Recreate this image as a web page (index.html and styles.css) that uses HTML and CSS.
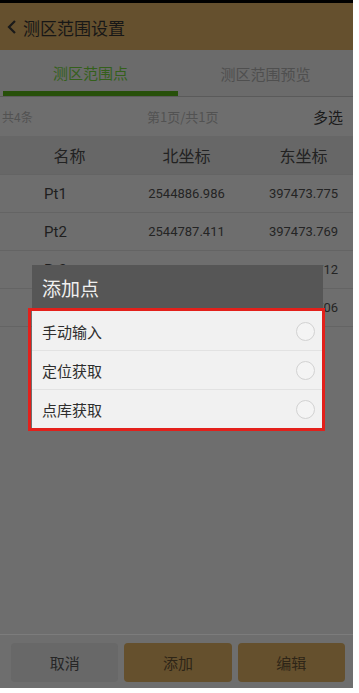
FILE: index.html
```html
<!DOCTYPE html>
<html lang="zh">
<head>
<meta charset="utf-8">
<link rel="stylesheet" href="styles.css">
</head>
<body>
<div class="screen">
  <div class="statusbar"></div>
  <div class="header">
    <svg class="back" width="10" height="16" viewBox="0 0 10 16"><path d="M8 2 L2 8 L8 14" fill="none" stroke="#1a1a1a" stroke-width="2.2"/></svg>
    <span class="title">测区范围设置</span>
  </div>
  <div class="tabs">
    <div class="tab active">测区范围点</div>
    <div class="tab">测区范围预览</div>
  </div>
  <div class="info">
    <span class="count">共4条</span>
    <span class="page">第1页/共1页</span>
    <span class="multi">多选</span>
  </div>
  <div class="row head">
    <span>名称</span><span>北坐标</span><span>东坐标</span>
  </div>
  <div class="row"><span class="name">Pt1</span><span class="num">2544886.986</span><span class="num">397473.775</span></div>
  <div class="row"><span class="name">Pt2</span><span class="num">2544787.411</span><span class="num">397473.769</span></div>
  <div class="row"><span class="name">Pt3</span><span class="num">2544687.312</span><span class="num">397573.712</span></div>
  <div class="row"><span class="name">Pt4</span><span class="num">2544587.806</span><span class="num">397573.706</span></div>
  <div class="spacer"></div>
  <div class="footer">
    <div class="btn cancel">取消</div>
    <div class="btn brown">添加</div>
    <div class="btn brown">编辑</div>
  </div>

  <div class="dialog">
    <div class="dlg-title">添加点</div>
    <div class="options">
      <div class="opt"><span>手动输入</span><i class="radio"></i></div>
      <div class="opt"><span>定位获取</span><i class="radio"></i></div>
      <div class="opt"><span>点库获取</span><i class="radio"></i></div>
      <div class="mark"></div>
    </div>
  </div>
</div>
</body>
</html>
```
FILE: styles.css
```css
html, body {
  margin: 0;
  padding: 0;
  background: #ffffff;
}
body {
  font-family: "Noto Sans CJK SC", "Roboto", sans-serif;
}
.screen {
  position: relative;
  width: 353px;
  height: 688px;
  background: #6e6e6e;
  display: flex;
  flex-direction: column;
  overflow: hidden;
}
.statusbar {
  height: 3px;
  background: #000;
}
.header {
  height: 47px;
  background: #65502e;
  display: flex;
  align-items: center;
  padding-left: 7px;
  gap: 6px;
}
.title {
  font-size: 17px;
  color: #171717;
  padding-top: 2px;
}
.tabs {
  height: 47px;
  background: #6b6b6b;
  display: flex;
  border-bottom: 1px solid #5a5a5a;
  box-sizing: border-box;
}
.tab {
  flex: 1;
  display: flex;
  align-items: center;
  justify-content: center;
  font-size: 15px;
  color: #4f4f4f;
  box-sizing: border-box;
}
.tab.active {
  color: #34601b;
  border-bottom: 5px solid #27500a;
  margin-left: 3px;
  padding-top: 4px;
}
.info {
  height: 39px;
  display: flex;
  align-items: center;
  padding: 0 10px 0 2px;
  font-size: 12px;
  color: #525252;
}
.count { width: 145px; }
.page { flex: 1; font-size: 13px; }
.multi {
  font-size: 15px;
  color: #1b1b1b;
}
.row {
  height: 38px;
  display: grid;
  grid-template-columns: 117px 117px 117px;
  padding-left: 11px;
  align-items: center;
  justify-items: center;
  border-bottom: 1px solid #646464;
  box-sizing: border-box;
  color: #1f1f1f;
}
.row.head {
  height: 39px;
  background: #676767;
  font-size: 16px;
  color: #222;
}
.name {
  font-family: "Roboto", sans-serif;
  font-size: 15px;
  margin-right: 28px;
}
.num {
  font-family: "Roboto", sans-serif;
  font-size: 13px;
  color: #242424;
}
.spacer { flex: 1; }
.footer {
  height: 54px;
  border-top: 1px solid #7c7c7c;
  box-sizing: border-box;
  display: flex;
  gap: 6px;
  padding: 8px 8px 6px 11px;
}
.btn {
  flex: 1;
  border-radius: 4px;
  display: flex;
  align-items: center;
  justify-content: center;
  font-size: 15px;
  color: #262626;
}
.btn.cancel { background: #686868; }
.btn.brown { background: #65502d; color: #2e2517; }

.dialog {
  position: absolute;
  left: 32px;
  top: 265px;
  width: 291px;
}
.dlg-title {
  height: 44px;
  background: #565656;
  color: #f0f0f0;
  font-size: 19px;
  display: flex;
  align-items: center;
  padding-left: 10px;
}
.options {
  position: relative;
  background: #f1f1f1;
  padding-top: 3px;
}
.opt {
  height: 39px;
  display: flex;
  align-items: center;
  justify-content: space-between;
  padding: 0 8px 0 10px;
  border-bottom: 1px solid #e2e2e2;
  box-sizing: border-box;
  font-size: 15px;
  color: #2e2e2e;
}
.opt:last-of-type { border-bottom: none; }
.radio {
  width: 19px;
  height: 19px;
  border: 1px solid #d2d2d2;
  border-radius: 50%;
  box-sizing: border-box;
  background: #f4f4f4;
}
.mark {
  position: absolute;
  left: -4px;
  right: -2px;
  top: -1px;
  bottom: -2px;
  border: 3px solid #e3201b;
}
```
